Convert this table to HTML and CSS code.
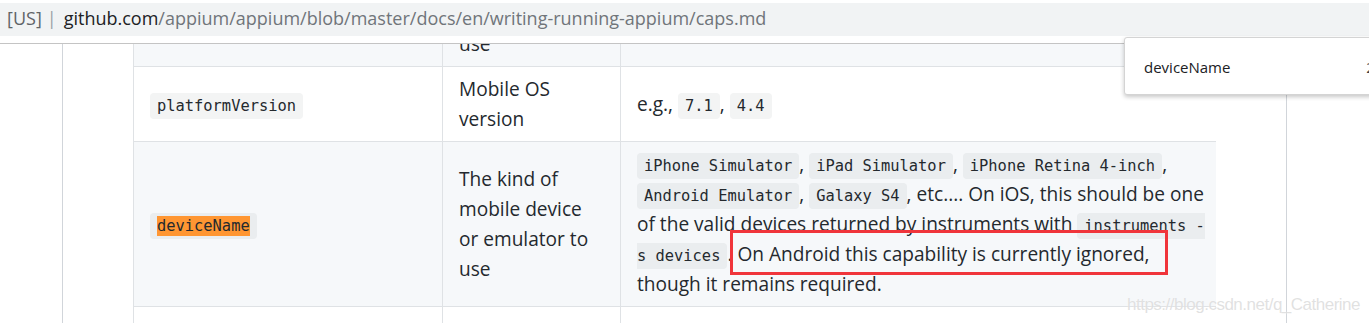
FILE: index.html
```html
<!DOCTYPE html>
<html lang="en">
<head>
<meta charset="utf-8">
<title>caps.md</title>
<link rel="stylesheet" href="styles.css">
</head>
<body>
<div class="urlbar"><span class="cc">[US]</span><span class="pipe">|</span><span class="host">github.com</span><span class="path">/appium/appium/blob/master/docs/en/writing-running-appium/caps.md</span></div>
<div class="topline"></div>
<div class="viewport">
  <div class="frame">
    <div class="tablewrap">
      <table class="caps">
        <colgroup><col class="c1"><col class="c2"><col class="c3"></colgroup>
        <tbody>
          <tr class="alt">
            <td><code>platformName</code></td>
            <td>Which mobile OS platform to use</td>
            <td><code>iOS</code>, <code>Android</code>, or <code>FirefoxOS</code></td>
          </tr>
          <tr>
            <td><code>platformVersion</code></td>
            <td>Mobile OS version</td>
            <td>e.g., <code>7.1</code>, <code>4.4</code></td>
          </tr>
          <tr class="alt">
            <td><code><mark class="hit">deviceName</mark></code></td>
            <td>The kind of mobile device or emulator to use</td>
            <td><code>iPhone Simulator</code>, <code>iPad Simulator</code>, <code>iPhone Retina 4-inch</code>, <code>Android Emulator</code>, <code>Galaxy S4</code>, etc.... On iOS, this should be one of the valid devices returned by instruments with <code>instruments -s devices</code>. <span class="flag">On Android this capability is currently ignored,</span> though it remains required.</td>
          </tr>
          <tr class="last">
            <td><code>app</code></td>
            <td>The absolute local path <em>or</em> remote http URL to a <code>.ipa</code> file (IOS), <code>.app</code> folder (IOS Simulator), <code>.apk</code> file (Android)</td>
            <td>e.g., <code>/abs/path/to/my.apk</code> or <code>http://myapp.com/App.zip</code></td>
          </tr>
        </tbody>
      </table>
    </div>
  </div>
</div>
<div class="popup"><span class="ptext">deviceName</span><span class="pcount">2/2</span></div>
<div class="watermark">https://blog.csdn.net/q_Catherine</div>
</body>
</html>
```
FILE: styles.css
```css
html, body {
  margin: 0;
  padding: 0;
}
body {
  width: 1369px;
  height: 323px;
  overflow: hidden;
  position: relative;
  background: #ffffff;
  font-family: "Open Sans", "Noto Sans", sans-serif;
  color: #24292e;
}
.urlbar {
  margin-top: 3px;
  height: 33px;
  line-height: 30px;
  background: #f1f3f4;
  padding-left: 7px;
  font-size: 18px;
  white-space: nowrap;
  color: #70757a;
}
.cc { color: #5f6368; }
.pipe { color: #9aa0a6; margin: 0 7px 0 5px; }
.host { color: #202124; }
.path { color: #70757a; }
.topline {
  height: 7px;
  border-bottom: 1px solid #c4c4c4;
}
.viewport {
  height: 279px;
  overflow: hidden;
}
.frame {
  display: flow-root;
  margin-left: 62px;
  width: 1153px;
  height: 100%;
  padding-left: 70px;
  border-left: 1px solid #d1d5da;
  border-right: 1px solid #d1d5da;
}
.tablewrap {
  width: 1083px;
  overflow: hidden;
  margin-top: -83px;
}
.caps {
  border-collapse: collapse;
  table-layout: fixed;
  width: 1090px;
  font-size: 19.1px;
  line-height: 30px;
}
.c1 { width: 309px; }
.c2 { width: 178px; }
.c3 { width: 603px; }
.caps td {
  border: 1px solid #dfe2e5;
  padding: 7px 16px;
  vertical-align: middle;
}
.caps tr.last td { padding-top: 10px; }
.caps tr { background: #ffffff; }
.caps tr.alt { background: #f6f8fa; }
code {
  font-family: "DejaVu Sans Mono", "Liberation Mono", monospace;
  font-size: 15.4px;
  line-height: 1;
  padding: 3.8px 7px;
  background: rgba(27, 31, 35, 0.05);
  border-radius: 4px;
}
.hit {
  background: #ff9632;
  color: #24292e;
  padding: 1px 0;
}
.flag {
  position: relative;
}
.flag::after {
  content: "";
  position: absolute;
  left: -7px;
  right: -18px;
  top: -11px;
  bottom: -8px;
  border: 3px solid #f0353b;
}
.popup {
  position: absolute;
  left: 1124px;
  top: 37px;
  width: 280px;
  height: 58px;
  background: #ffffff;
  border: 1px solid #d4d4d4;
  border-radius: 3px;
  box-shadow: 0 2px 4px rgba(0, 0, 0, 0.22);
  display: flex;
  align-items: center;
  justify-content: space-between;
  padding: 2px 0 0 19px;
  box-sizing: border-box;
  font-size: 15px;
  color: #202124;
}
.pcount { margin-right: 14px; color: #3c4043; }
.watermark {
  position: absolute;
  left: 1127px;
  top: 295px;
  font-family: "Liberation Sans", Arial, sans-serif;
  font-size: 17px;
  letter-spacing: -0.5px;
  color: rgba(200, 200, 200, 0.55);
  text-shadow: 0 0 1px rgba(255, 255, 255, 0.9);
  white-space: nowrap;
}
```
